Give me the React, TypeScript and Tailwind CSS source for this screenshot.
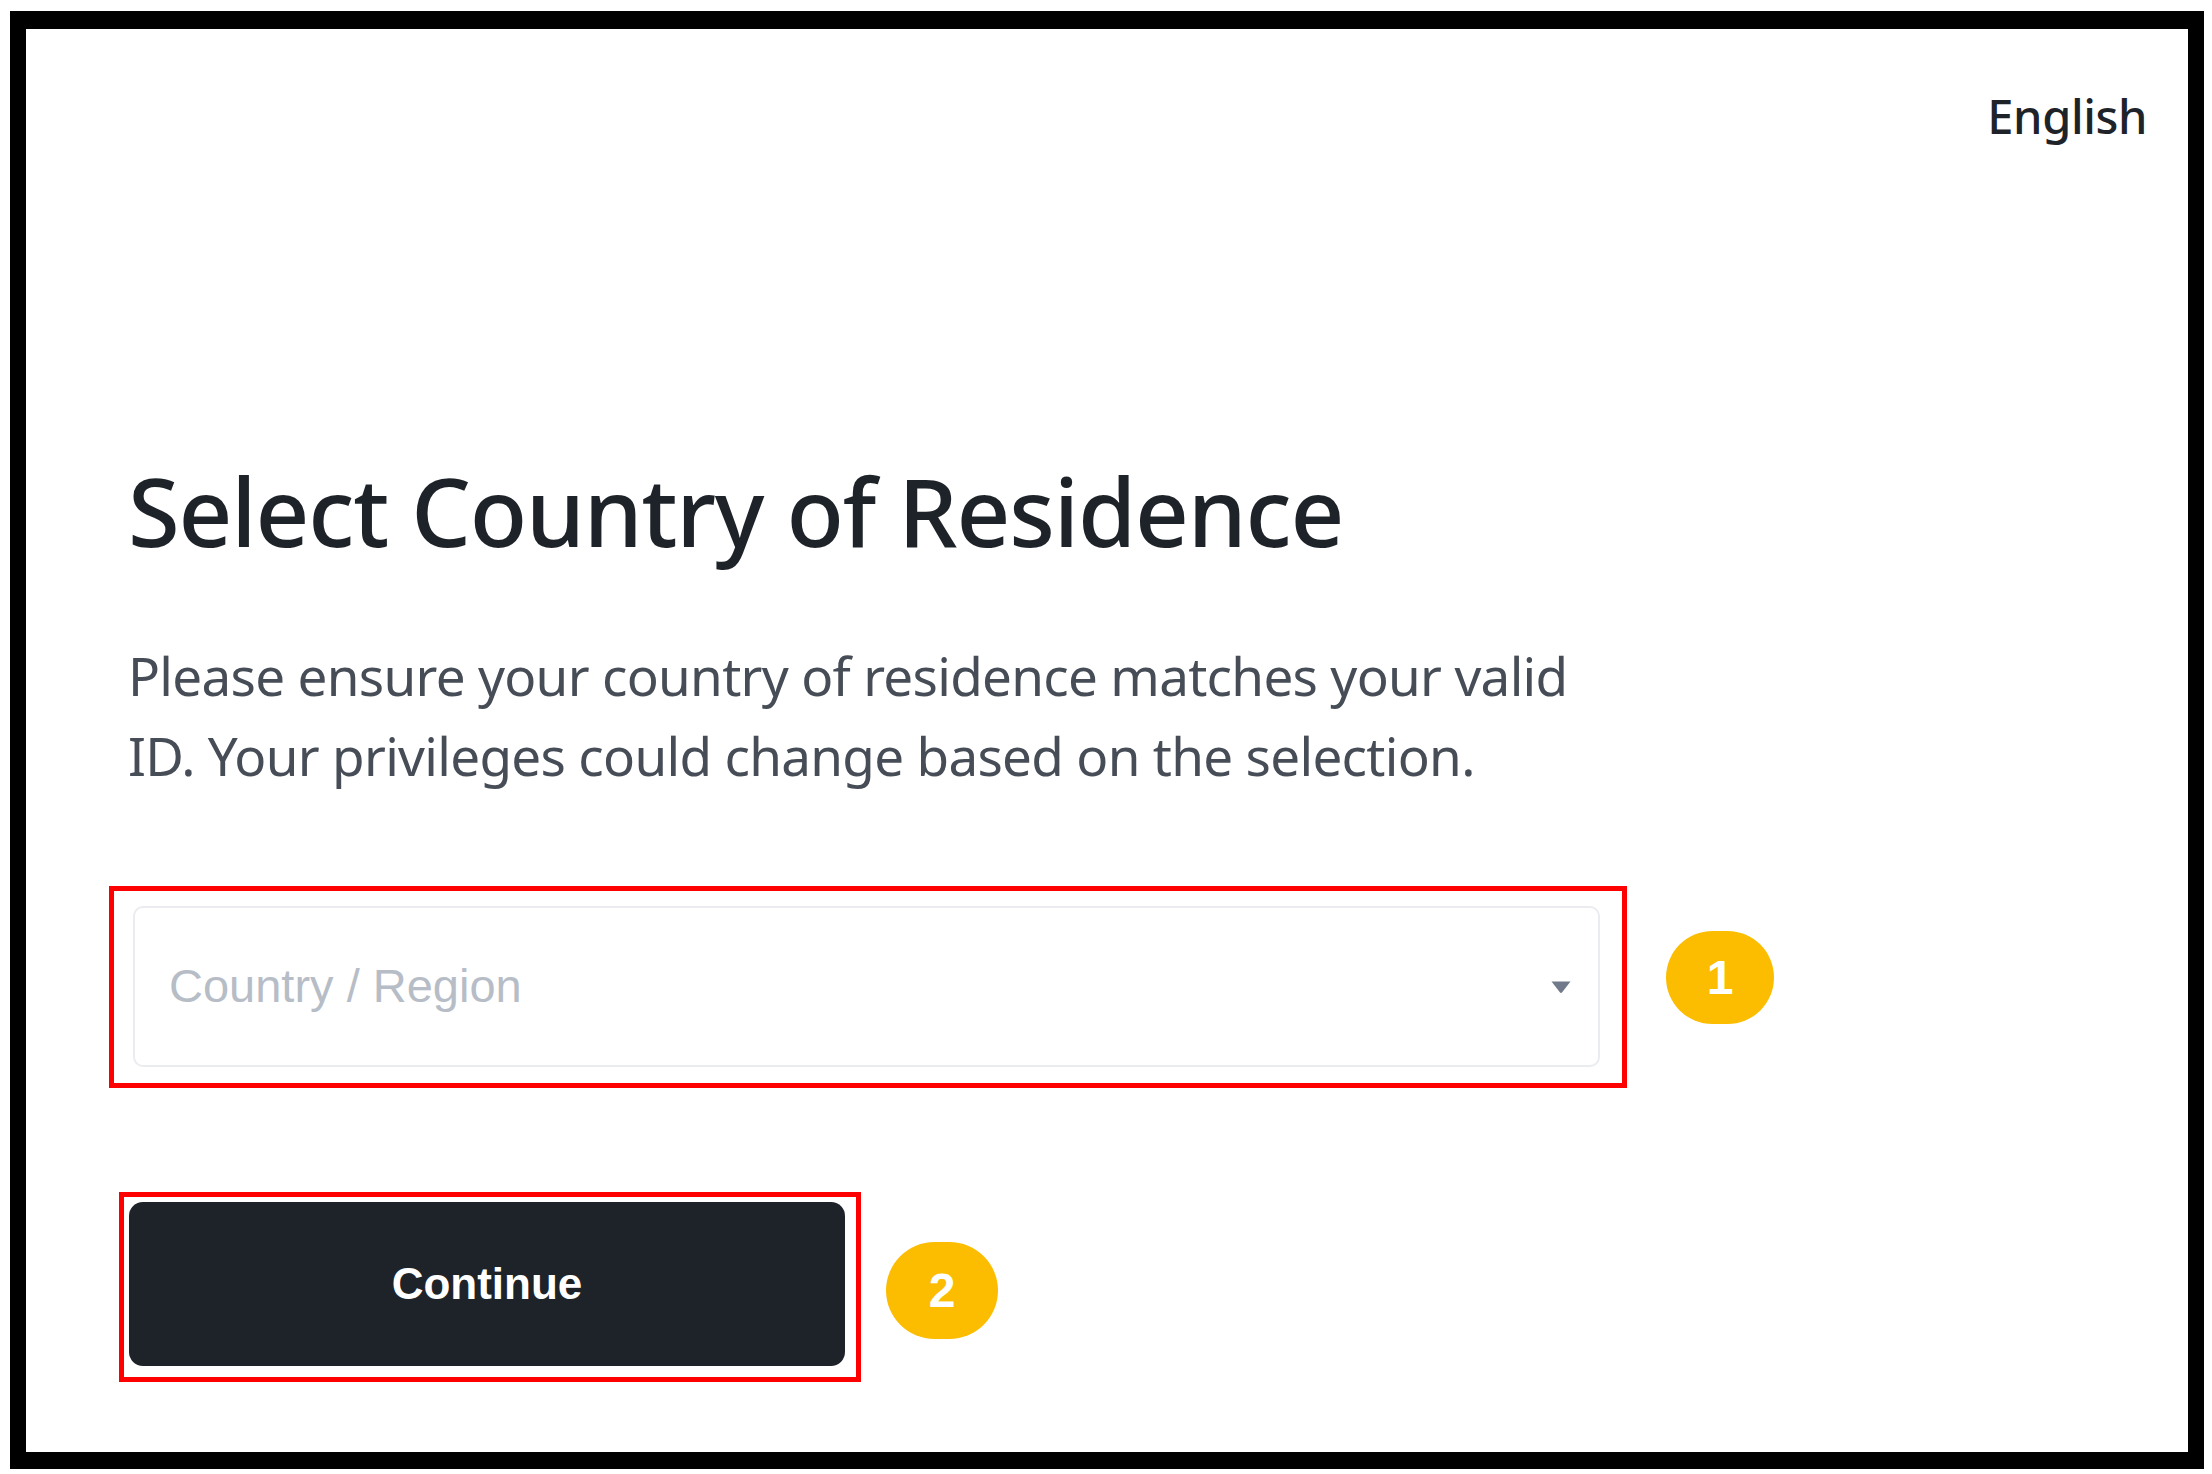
import React from "react";

export default function App() {
  return (
    <div className="w-[2212px] h-[1474px] bg-white overflow-hidden">
      <div className="ml-[10px] mt-[11px] w-[2194px] h-[1458px] border-black border-x-[16px] border-t-[18px] border-b-[17px] bg-white flex flex-col">
        {/* Header */}
        <div className="flex justify-end pt-[64px] pr-[41px]">
          <span className="font-['Noto_Sans',sans-serif] text-[47px] leading-none font-medium text-[#1e2329] tracking-[-0.4px]">
            English
          </span>
        </div>

        {/* Content */}
        <div className="pl-[102px] flex flex-col items-start mt-[315px]">
          <h1 className="font-['Noto_Sans',sans-serif] text-[94px] leading-[112px] font-medium text-[#1e2329] whitespace-nowrap tracking-[-1.2px]">
            Select Country of Residence
          </h1>
          <p className="mt-[69px] font-['Noto_Sans',sans-serif] text-[53px] leading-[80px] text-[#474d57] whitespace-nowrap tracking-[-0.7px]">
            Please ensure your country of residence matches your valid
            <br />
            ID. Your privileges could change based on the selection.
          </p>

          {/* Select row */}
          <div className="mt-[90px] ml-[-19px] flex items-start">
            <div className="border-[5px] border-[#ff0000] pt-[15px] pl-[19px] pr-[22px] pb-[16px]">
              <div className="w-[1467px] h-[161px] rounded-[10px] border-2 border-[#eaecef] bg-white flex items-center justify-between pl-[34px] pr-[26px]">
                <span className="font-['Liberation_Sans',Arial,sans-serif] text-[47px] text-[#b7bdc6]">
                  Country / Region
                </span>
                <svg width="22" height="14" viewBox="0 0 22 14" className="block">
                  <path d="M1.5 1.5 H20.5 L12.2 12.2 Q11 13.6 9.8 12.2 Z" fill="#707a8a" />
                </svg>
              </div>
            </div>
            <div className="ml-[39px] mt-[45px] w-[108px] h-[93px] rounded-full bg-[#fcbd00] flex items-center justify-center">
              <span className="font-['Liberation_Sans',Arial,sans-serif] font-bold text-[48px] leading-none text-white">
                1
              </span>
            </div>
          </div>

          {/* Button row */}
          <div className="mt-[104px] ml-[-9px] flex items-start">
            <div className="border-[5px] border-[#ff0000] pt-[5px] pl-[5px] pr-[11px] pb-[11px]">
              <button className="w-[716px] h-[164px] rounded-[14px] bg-[#1e2329] flex items-center justify-center">
                <span className="font-['Liberation_Sans',Arial,sans-serif] font-bold text-[44px] leading-none text-white">
                  Continue
                </span>
              </button>
            </div>
            <div className="ml-[25px] mt-[50px] w-[112px] h-[97px] rounded-full bg-[#fcbd00] flex items-center justify-center">
              <span className="font-['Liberation_Sans',Arial,sans-serif] font-bold text-[48px] leading-none text-white">
                2
              </span>
            </div>
          </div>
        </div>
      </div>
    </div>
  );
}
